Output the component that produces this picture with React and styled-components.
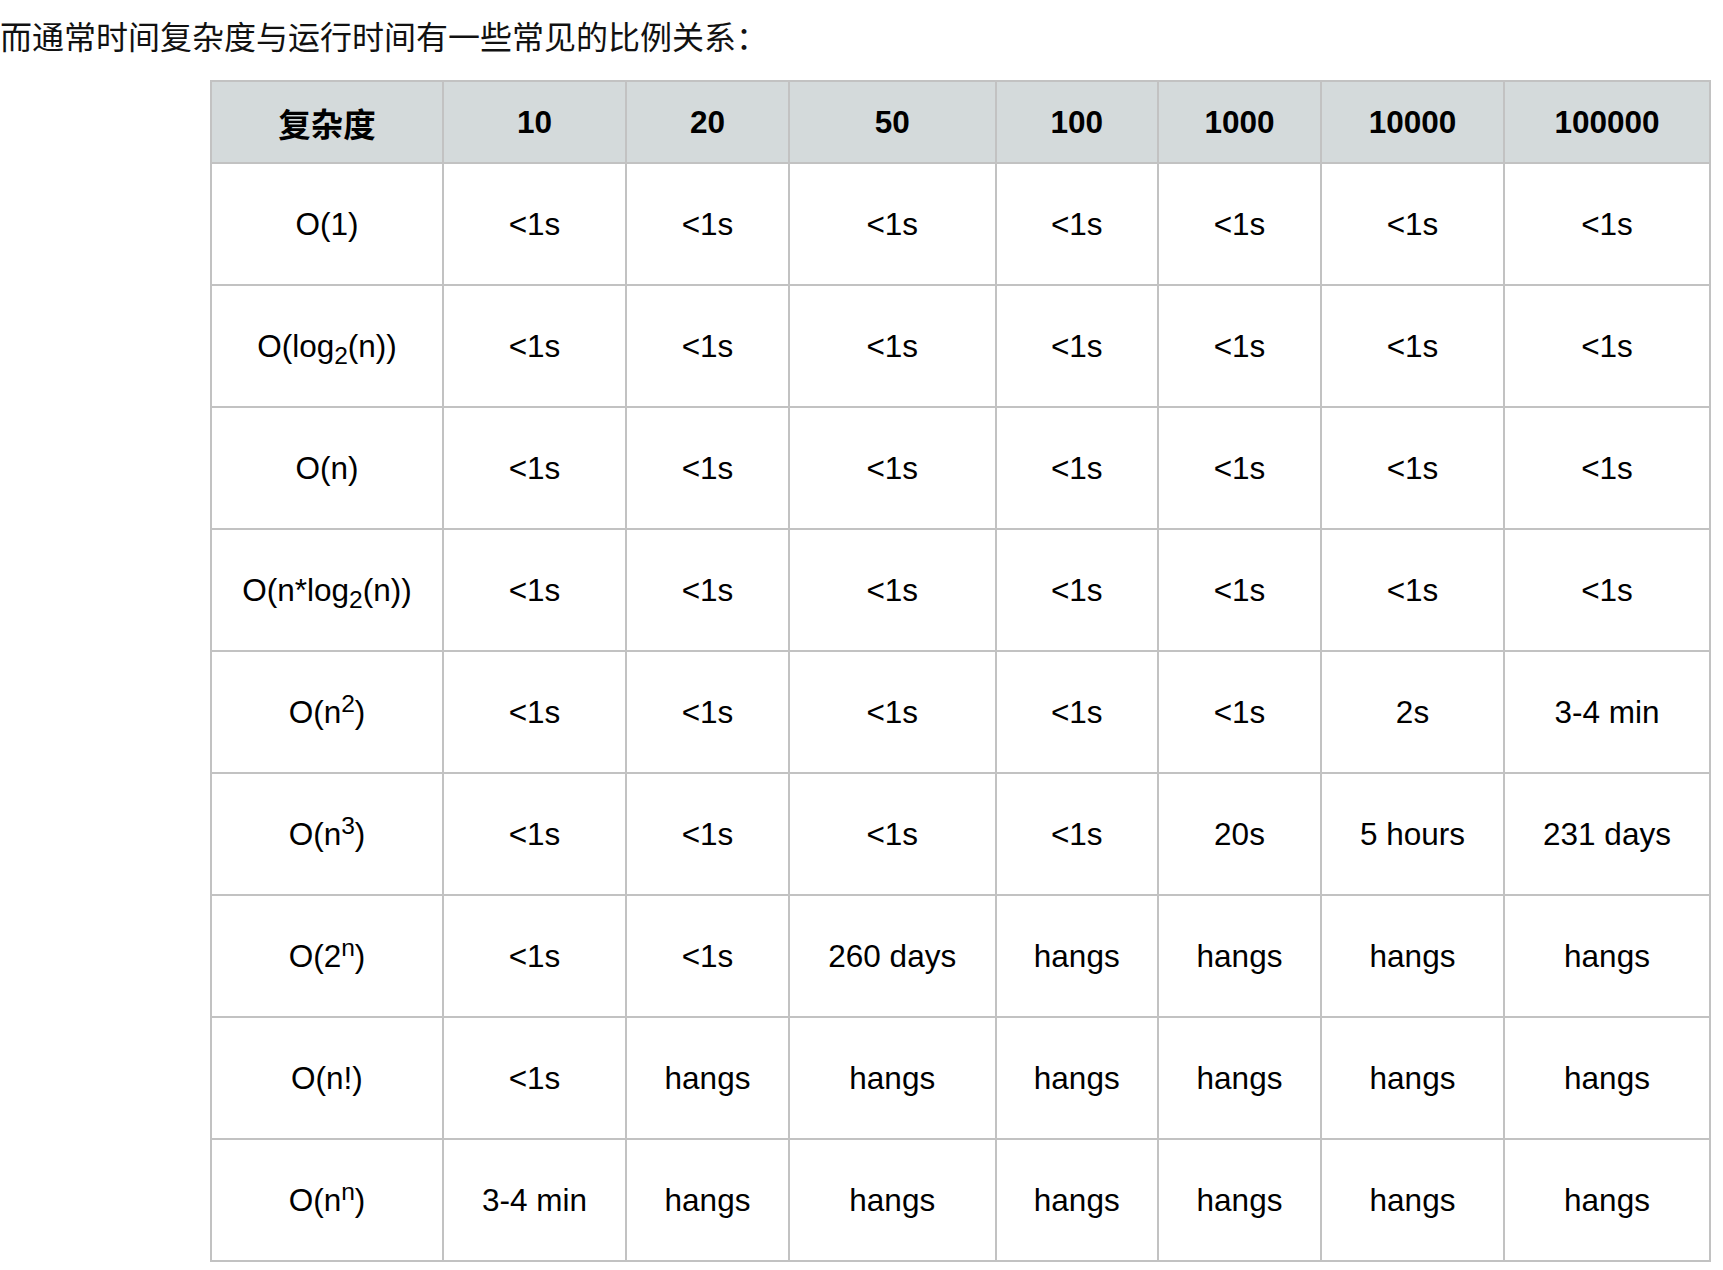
import styled, { createGlobalStyle } from "styled-components";

const GlobalStyle = createGlobalStyle`
  html, body {
    margin: 0;
    padding: 0;
    background: #fff;
  }
  body {
    font-family: "Liberation Sans", Arial, "Noto Sans CJK SC", sans-serif;
    color: #000;
  }
`;

const COLUMNS = [232, 183, 163, 206.5, 162.5, 163, 183, 206];
const HEADERS = ["复杂度", "10", "20", "50", "100", "1000", "10000", "100000"];

const ROWS = [
  { label: ["O(1)"], cells: ["<1s", "<1s", "<1s", "<1s", "<1s", "<1s", "<1s"] },
  { label: ["O(log", { sub: "2" }, "(n))"], cells: ["<1s", "<1s", "<1s", "<1s", "<1s", "<1s", "<1s"] },
  { label: ["O(n)"], cells: ["<1s", "<1s", "<1s", "<1s", "<1s", "<1s", "<1s"] },
  { label: ["O(n*log", { sub: "2" }, "(n))"], cells: ["<1s", "<1s", "<1s", "<1s", "<1s", "<1s", "<1s"] },
  { label: ["O(n", { sup: "2" }, ")"], cells: ["<1s", "<1s", "<1s", "<1s", "<1s", "2s", "3-4 min"] },
  { label: ["O(n", { sup: "3" }, ")"], cells: ["<1s", "<1s", "<1s", "<1s", "20s", "5 hours", "231 days"] },
  { label: ["O(2", { sup: "n" }, ")"], cells: ["<1s", "<1s", "260 days", "hangs", "hangs", "hangs", "hangs"] },
  { label: ["O(n!)"], cells: ["<1s", "hangs", "hangs", "hangs", "hangs", "hangs", "hangs"] },
  { label: ["O(n", { sup: "n" }, ")"], cells: ["3-4 min", "hangs", "hangs", "hangs", "hangs", "hangs", "hangs"] },
];

const Page = styled.div`
  padding: 0 0 8px 0;
`;

const Intro = styled.p`
  margin: 0;
  padding-top: 16px;
  font-family: "Noto Sans CJK SC", "Liberation Sans", sans-serif;
  font-weight: 400;
  font-size: 32px;
  line-height: 38px;
  color: #111;
`;

const Table = styled.table`
  margin: 26px 0 0 210px;
  width: 1499px;
  table-layout: fixed;
  border-collapse: collapse;
  border: 2px solid #c2c2c2;
  font-size: 31.5px;
`;

const HeadCell = styled.th`
  height: 80px;
  padding: 0;
  background: #d4dadb;
  border: 2px solid #c2c2c2;
  font-weight: 700;
  text-align: center;
  vertical-align: middle;
  font-family: ${({ $cjk }) =>
    $cjk
      ? `"Noto Sans CJK SC", "Liberation Sans", sans-serif`
      : `"Liberation Sans", Arial, sans-serif`};
  font-size: ${({ $cjk }) => ($cjk ? "32.5px" : "31.5px")};
`;

const Cell = styled.td`
  height: 120px;
  padding: 0;
  border: 2px solid #c2c2c2;
  text-align: center;
  vertical-align: middle;
  white-space: nowrap;
`;

const Sub = styled.sub`
  font-size: 0.78em;
  vertical-align: -0.28em;
  line-height: 0;
`;

const Sup = styled.sup`
  font-size: 0.78em;
  vertical-align: 0.45em;
  line-height: 0;
`;

const renderLabel = (parts) =>
  parts.map((p, i) => {
    if (typeof p === "string") return <span key={i}>{p}</span>;
    if (p.sub) return <Sub key={i}>{p.sub}</Sub>;
    return <Sup key={i}>{p.sup}</Sup>;
  });

export default function App() {
  return (
    <Page>
      <GlobalStyle />
      <Intro>而通常时间复杂度与运行时间有一些常见的比例关系：</Intro>
      <Table>
        <colgroup>
          {COLUMNS.map((w, i) => (
            <col key={i} style={{ width: `${w}px` }} />
          ))}
        </colgroup>
        <thead>
          <tr>
            {HEADERS.map((h, i) => (
              <HeadCell key={h} $cjk={i === 0}>
                {h}
              </HeadCell>
            ))}
          </tr>
        </thead>
        <tbody>
          {ROWS.map((row, r) => (
            <tr key={r}>
              <Cell>{renderLabel(row.label)}</Cell>
              {row.cells.map((c, i) => (
                <Cell key={i}>{c}</Cell>
              ))}
            </tr>
          ))}
        </tbody>
      </Table>
    </Page>
  );
}
